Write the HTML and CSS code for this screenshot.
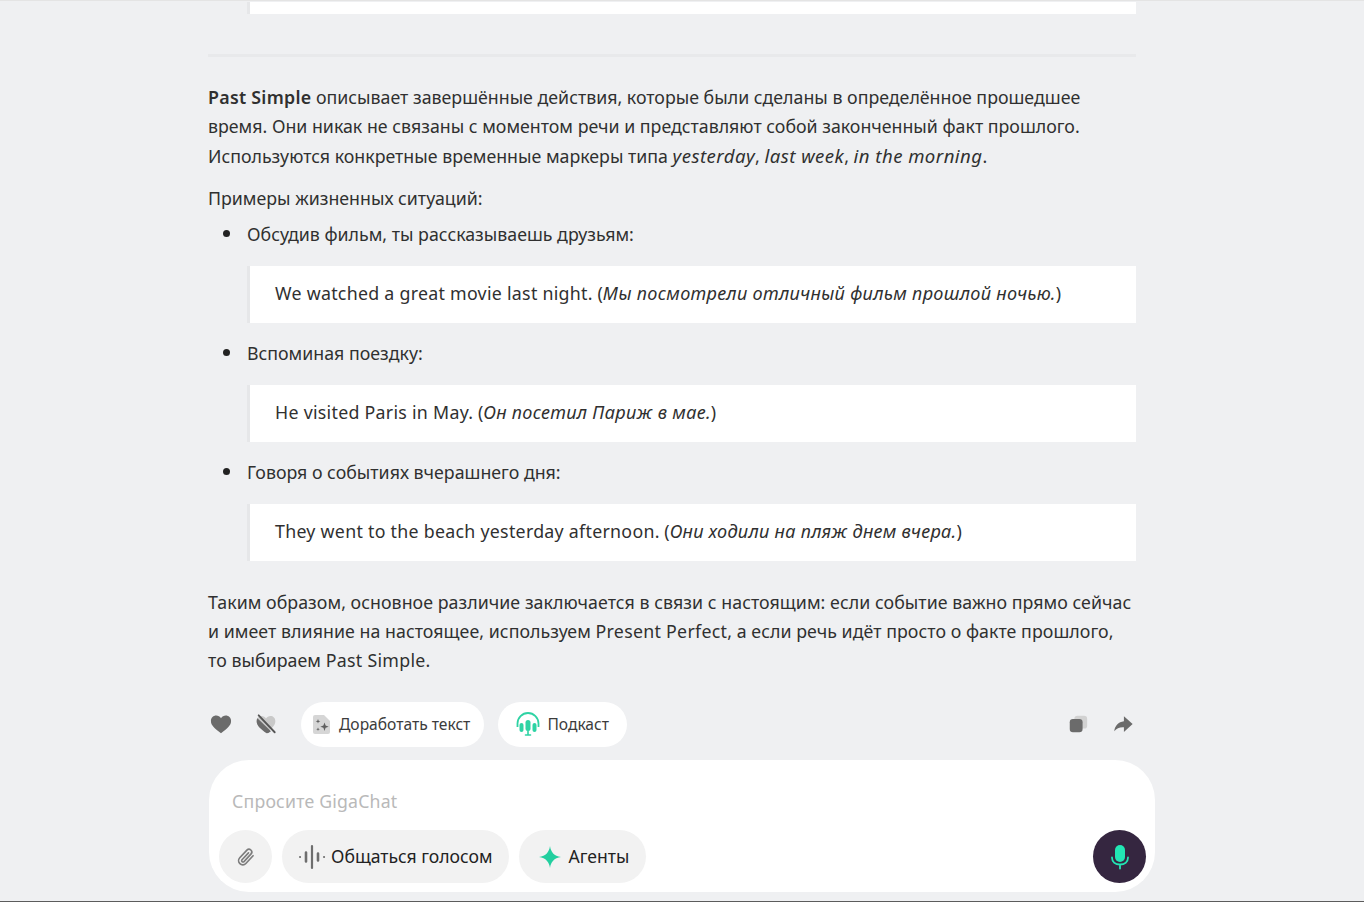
FILE: index.html
```html
<!DOCTYPE html>
<html lang="ru">
<head>
<meta charset="utf-8">
<title>GigaChat</title>
<link rel="stylesheet" href="styles.css">
</head>
<body>
<div class="page">
  <main class="column">
    <blockquote class="quote quote-cut"></blockquote>
    <hr class="rule">
    <p class="para para-first"><strong class="lat">Past Simple</strong> описывает завершённые действия, которые были сделаны в определённое прошедшее время. Они никак не связаны с моментом речи и представляют собой законченный факт прошлого. Используются конкретные временные маркеры типа <em class="em-lat">yesterday</em>, <em class="em-lat">last week</em>, <em class="em-lat">in the morning</em>.</p>
    <p class="para para-lead">Примеры жизненных ситуаций:</p>
    <ul class="list">
      <li class="item">Обсудив фильм, ты рассказываешь друзьям:
        <blockquote class="quote"><span class="lat">We watched a great movie last night.</span> (<em>Мы посмотрели отличный фильм прошлой ночью.</em>)</blockquote>
      </li>
      <li class="item">Вспоминая поездку:
        <blockquote class="quote"><span class="lat">He visited Paris in May.</span> (<em>Он посетил Париж в мае.</em>)</blockquote>
      </li>
      <li class="item">Говоря о событиях вчерашнего дня:
        <blockquote class="quote"><span class="lat">They went to the beach yesterday afternoon.</span> (<em>Они ходили на пляж днем вчера.</em>)</blockquote>
      </li>
    </ul>
    <p class="para para-last">Таким образом, основное различие заключается в связи с настоящим: если событие важно прямо сейчас и имеет влияние на настоящее, используем <span class="lat">Present Perfect</span>, а если речь идёт просто о факте прошлого, то выбираем <span class="lat">Past Simple</span>.</p>
    <div class="actions">
      <button class="icon-btn" aria-label="Нравится">
        <svg width="24" height="24" viewBox="0 0 24 24"><path fill="#6b6b6b" d="M12 22C5.200 17 1 13.600 1 8.700 1 5.200 3.700 2.800 6.800 2.800c2.100 0 4 1.100 5.200 2.900 1.200-1.800 3.100-2.900 5.200-2.900 3.100 0 5.800 2.400 5.800 5.900 0 4.900-4.200 8.300-11 13.300z"/></svg>
      </button>
      <button class="icon-btn icon-btn-second" aria-label="Не нравится">
        <svg width="24" height="24" viewBox="0 0 24 24"><path fill="#c9c9c9" d="M12 21.500C5.500 16.800 1.800 13.400 1.800 8.900 1.800 5.600 4.300 3.400 7.100 3.400c2 0 3.800 1 4.900 2.700 1.100-1.700 2.900-2.700 4.900-2.700 2.800 0 5.300 2.200 5.300 5.500 0 4.500-3.700 7.900-10.200 12.600z"/><path fill="#6b6b6b" d="M2.600 5.800 17.400 20l-2.800 1.700-1.800.5C5.600 17 1.800 13.500 1.800 8.900c0-1.200.3-2.200.8-3.100z"/><path stroke="#555" stroke-width="2" stroke-linecap="round" d="M4 2.500 21.500 21"/></svg>
      </button>
      <button class="pill pill-first">
        <svg width="20" height="24" viewBox="0 0 20 24"><path fill="#d6d6d6" d="M3 3h9l6 6v11a2 2 0 0 1-2 2H3a2 2 0 0 1-2-2V5a2 2 0 0 1 2-2z"/><path fill="#5f5f5f" d="M12.500 10.500l1.100 3.100 3.100 1.100-3.100 1.100-1.100 3.100-1.100-3.100-3.100-1.100 3.100-1.100zM6 7l.6 1.700 1.700.6-1.700.6L6 11.600l-.6-1.700-1.700-.6 1.700-.6zM6 15.500l.5 1.300 1.300.5-1.300.5-.5 1.300-.5-1.300-1.300-.5 1.300-.5z"/></svg>
        Доработать текст
      </button>
      <button class="pill">
        <svg width="24" height="24" viewBox="0 0 24 24" fill="none"><path stroke="#2ed3a4" stroke-width="1.800" d="M1.500 15v-3.500a10.500 10.500 0 0 1 21 0V15"/><rect x="3.500" y="11" width="4" height="9" rx="2" fill="#2ed3a4"/><rect x="16.500" y="11" width="4" height="9" rx="2" fill="#2ed3a4"/><rect x="9.500" y="8" width="5" height="11" rx="2.500" fill="#2ed3a4"/><path stroke="#2ed3a4" stroke-width="1.600" stroke-linecap="round" d="M12 19v4M9.500 23h5"/></svg>
        Подкаст
      </button>
      <div class="spacer"></div>
      <button class="icon-btn" aria-label="Копировать">
        <svg width="24" height="24" viewBox="0 0 24 24"><rect x="8" y="3" width="14" height="14" rx="3.500" fill="#d2d2d2"/><rect x="3" y="6.500" width="14" height="14.500" rx="3.500" fill="#6b6b6b"/></svg>
      </button>
      <button class="icon-btn icon-btn-second" aria-label="Поделиться">
        <svg width="24" height="24" viewBox="0 0 24 24"><path fill="#6b6b6b" d="M13 3.500 22.500 12 13 20.800v-5.300c-4.600-.3-7.900 1-10.500 4.400.5-6 4.500-10.200 10.500-11z"/></svg>
      </button>
    </div>
    <form class="composer">
      <div class="placeholder">Спросите GigaChat</div>
      <div class="tools">
        <button type="button" class="tool tool-round" aria-label="Прикрепить">
          <svg width="20" height="20" viewBox="0 0 24 24" fill="none"><path stroke="#7d7d7d" stroke-width="2" stroke-linecap="round" stroke-linejoin="round" d="M20.500 10.500 11.800 19.800a5 5 0 0 1-7.300-6.900l8.600-9.200a3.400 3.400 0 0 1 5 4.600l-8.500 9.200a1.600 1.600 0 0 1-2.400-2.200l7.800-8.300"/></svg>
        </button>
        <button type="button" class="tool tool-voice">
          <svg width="28" height="26" viewBox="0 0 28 26"><g fill="none" stroke="#6e6e6e" stroke-linecap="round"><path stroke-width="2" d="M2 13h.1M26 13h.1"/><path stroke-width="2.600" d="M8 8.500v9M20 9.500v7"/><path stroke-width="2.200" d="M14 2v22"/></g></svg>
          Общаться голосом
        </button>
        <button type="button" class="tool tool-agents">
          <svg width="22" height="22" viewBox="0 0 22 22"><path fill="#22cf9f" d="M11 0c.8 6 4 10 11 11-7 1-10.200 5-11 11-.8-6-4-10-11-11 7-1 10.200-5 11-11z"/></svg>
          Агенты
        </button>
        <div class="spacer"></div>
        <button type="button" class="mic" aria-label="Голосовой ввод">
          <svg width="22" height="26" viewBox="0 0 22 26" fill="none"><rect x="6" y="1" width="10" height="17" rx="5" fill="#22e6b4"/><path stroke="#22e6b4" stroke-width="1.800" stroke-linecap="round" d="M3 13.500c0 4.500 3.500 7 8 7s8-2.500 8-7M11 20.500v4"/></svg>
        </button>
      </div>
    </form>
  </main>
</div>
</body>
</html>
```
FILE: styles.css
```css
* { box-sizing: border-box; }
html, body { margin: 0; height: 100%; }
body {
  background: #eff0f2;
  color: #303030;
  font-family: "Noto Sans", "Open Sans", sans-serif;
  font-size: 17.780px;
  line-height: 29.3px;
  overflow: hidden;
}
.lat { letter-spacing: .28px; }
em {
  font-size: 18.100px;
  line-height: 1;
  letter-spacing: .3px;
}
.em-lat {
  font-size: 18.600px;
  letter-spacing: .45px;
}
strong { font-weight: 600; }
.page {
  height: 902px;
  border-top: 1px solid #e4e4e4;
  border-bottom: 1px solid #5c5c5c;
  overflow: hidden;
}
.column {
  width: 948px;
  margin-left: 208px;
  padding-top: 1px;
}
.column > .quote, .column > .rule, .column > .para, .column > .list, .column > .actions { width: 928px; }
.quote {
  margin: 0;
  background: #fff;
  border-left: 3px solid #e6e7e9;
  padding: 14px 25px;
  margin-left: 39px;
}
.column > .quote-cut {
  width: 889px;
  height: 12px;
  padding: 0;
}
.rule {
  border: 0;
  height: 3px;
  background: #e8e9eb;
  margin: 40px 0 0;
}
.para { margin: 0; }
.para-first { margin-top: 26px; }
.para-lead { margin-top: 13px; }
.column > .para-last {
  width: 925px;
  margin-top: 27.300px;
  letter-spacing: .05px;
}
.list {
  margin: 7px 0 0;
  padding: 0 0 0 39px;
  list-style: none;
}
.item {
  position: relative;
  margin-bottom: 16px;
}
.item:last-child { margin-bottom: 0; }
.item::before {
  content: "";
  position: absolute;
  left: -24px;
  top: 10px;
  width: 7px;
  height: 7px;
  border-radius: 50%;
  background: #222;
}
.item .quote {
  margin: 17px 0 0;
  height: 56.500px;
  padding-top: 13px;
}
.actions {
  display: flex;
  align-items: center;
  height: 45px;
  margin-top: 26px;
}
.spacer { flex: 1; }
button {
  font: inherit;
  color: inherit;
  border: 0;
  background: none;
  padding: 0;
}
.icon-btn {
  width: 26px;
  height: 24px;
  display: flex;
  justify-content: center;
  align-items: center;
}
.icon-btn svg { width: 22px; height: 22px; }
.icon-btn-second { margin-left: 19px; }
.pill {
  display: flex;
  align-items: center;
  gap: 7px;
  height: 45px;
  background: #fff;
  border-radius: 23px;
  padding: 0 18px;
  font-size: 15.600px;
  color: #3c3c3c;
  margin-left: 14px;
}
.pill-first {
  margin-left: 22px;
  padding: 0 14px 0 11px;
}
.composer {
  width: 946px;
  height: 132px;
  margin: 13px 0 0 1px;
  background: #fff;
  border-radius: 40px;
  padding: 27px 9px 0 10px;
}
.placeholder {
  color: #b9b9b9;
  padding-left: 13px;
  font-size: 17.700px;
  letter-spacing: .2px;
}
.tools {
  display: flex;
  align-items: center;
  gap: 10px;
  margin-top: 14px;
}
.tool {
  display: flex;
  align-items: center;
  justify-content: center;
  height: 53px;
  border-radius: 27px;
  background: #f2f2f2;
  color: #222;
  font-size: 17.600px;
}
.tool-round { width: 53px; }
.tool-voice { padding: 0 16px; gap: 5px; }
.tool-agents { padding: 0 17px 0 20px; gap: 8px; }
.mic {
  width: 53px;
  height: 53px;
  border-radius: 50%;
  background: #352640;
  display: flex;
  align-items: center;
  justify-content: center;
}
```
